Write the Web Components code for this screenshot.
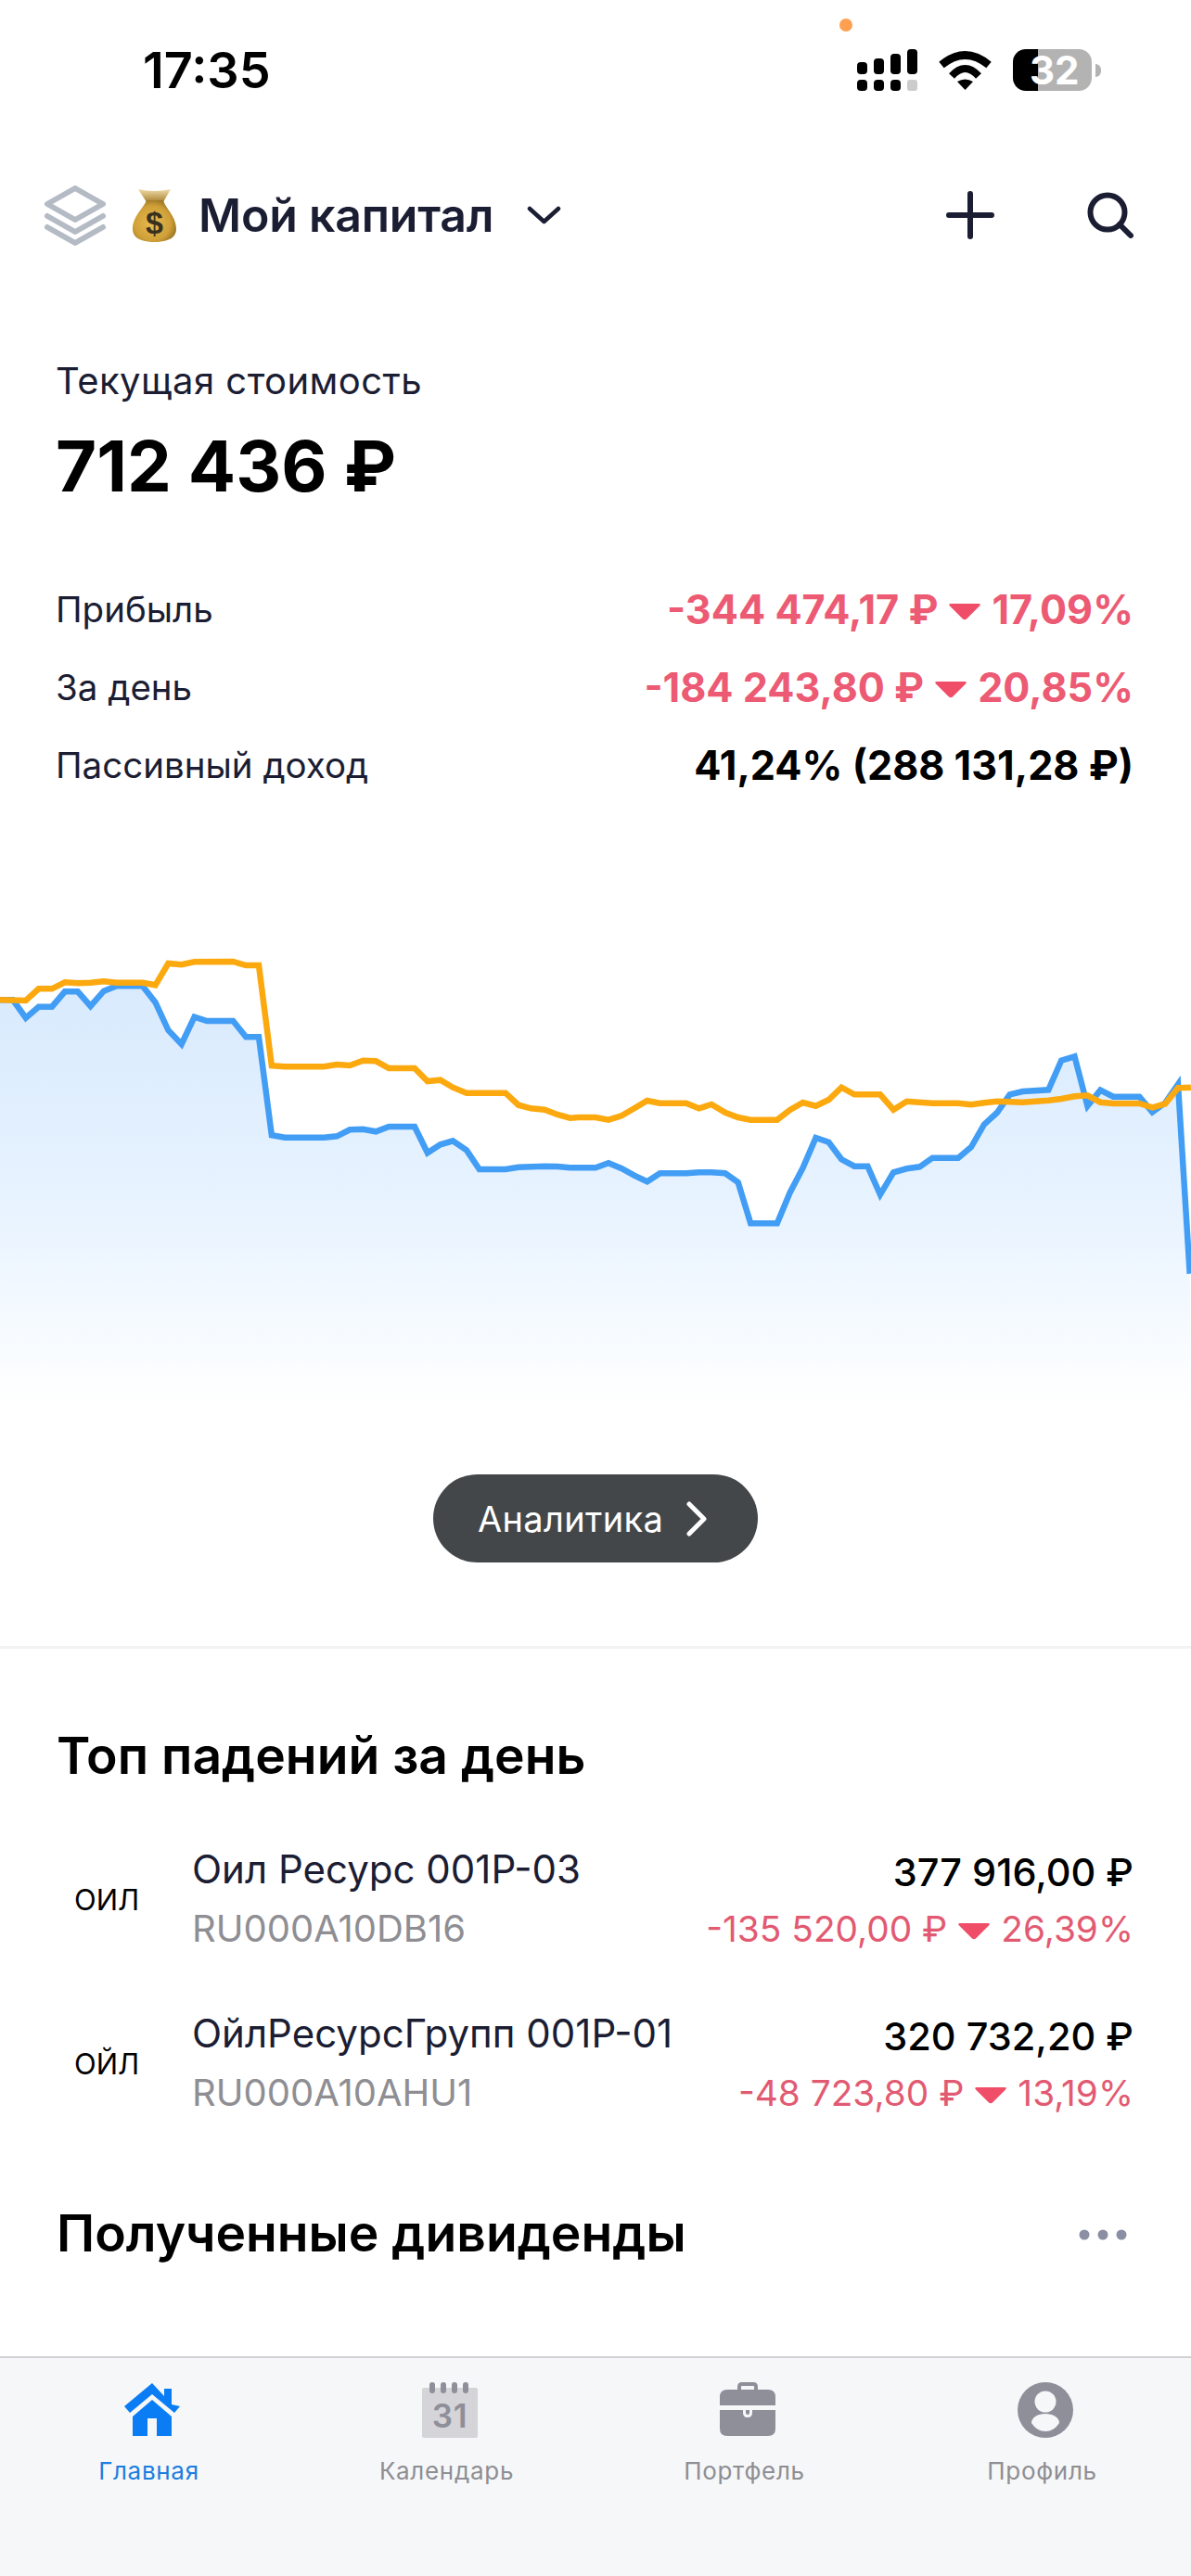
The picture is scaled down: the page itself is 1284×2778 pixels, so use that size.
<!DOCTYPE html>
<html lang="ru">
<head>
<meta charset="utf-8">
<title>Мой капитал</title>
<style>
  html, body { margin: 0; background: #fff; }
  body { font-family: Inter, "Noto Sans", sans-serif; }
</style>
</head>
<body>
<portfolio-screen>
  <status-bar></status-bar>
  <app-header></app-header>
  <value-summary>
    <stat-row label="Прибыль" tone="loss"><delta-text amount="-344 474,17 ₽" percent="17,09%"></delta-text></stat-row>
    <stat-row label="За день" tone="loss"><delta-text amount="-184 243,80 ₽" percent="20,85%"></delta-text></stat-row>
    <stat-row label="Пассивный доход">41,24% (288 131,28 ₽)</stat-row>
  </value-summary>
  <chart-panel></chart-panel>
  <section-block heading="Топ падений за день">
    <position-row ticker="ОИЛ" name="Оил Ресурс 001Р-03" isin="RU000A10DB16" total="377 916,00 ₽" amount="-135 520,00 ₽" percent="26,39%"></position-row>
    <position-row ticker="ОЙЛ" name="ОйлРесурсГрупп 001Р-01" isin="RU000A10AHU1" total="320 732,20 ₽" amount="-48 723,80 ₽" percent="13,19%"></position-row>
  </section-block>
  <dividends-head></dividends-head>
  <tab-bar slot="footer"></tab-bar>
</portfolio-screen>

<script>
// small helper, every component sets its shadow markup the same way
class ShadowElement extends HTMLElement {
  constructor() {
    super();
    this.attachShadow({ mode: 'open' });
  }
  render(html) {
    this.shadowRoot.innerHTML = html;
  }
  attr(name) {
    return this.getAttribute(name) || '';
  }
}

class PortfolioScreen extends ShadowElement {
  connectedCallback() {
    this.render(`
      <style>
        :host { display: flex; flex-direction: column; height: 2778px; overflow: hidden; color: #1b1d33; }
        main { flex: 1; min-height: 0; overflow: hidden; }
      </style>
      <main><slot></slot></main>
      <slot name="footer"></slot>`);
  }
}

class StatusBar extends ShadowElement {
  connectedCallback() {
    this.render(`
      <style>
        :host { display: block; height: 150px; position: relative; color: #000; }
        .row { display: flex; align-items: center; height: 45px; padding: 53px 97px 0 154px; }
        .time { font: 600 54px/45px Inter, sans-serif; flex: 1; }
        .dot { position: absolute; left: 905px; top: 20px; width: 14px; height: 14px; border-radius: 50%; background: #ff9f50; }
        .wifi { margin: 0 23px; display: block; }
        .signal { display: block; }
        .battery { display: flex; align-items: center; position: relative; }
        .cell { position: relative; width: 85px; height: 45px; border-radius: 14px; background: linear-gradient(90deg, #000 27px, #b3b3b3 27px); color: #fff; font: 700 42px/45px Inter, sans-serif; }
        .cell span { position: absolute; left: 18px; top: 0; }
        .nub { width: 6px; height: 14px; margin-left: 4px; background: #b3b3b3; border-radius: 0 7px 7px 0; }
      </style>
      <div class="dot"></div>
      <div class="row">
        <div class="time">17:35</div>
        <svg class="signal" width="65" height="45" viewBox="0 0 65 45">
          <rect x="0" y="14" width="11" height="13" rx="4"/><rect x="18" y="10" width="11" height="17" rx="4"/>
          <rect x="36" y="5" width="11" height="22" rx="4"/><rect x="54" y="0" width="11" height="27" rx="4"/>
          <rect x="0" y="33" width="11" height="12" rx="4"/><rect x="18" y="33" width="11" height="12" rx="4"/>
          <rect x="36" y="33" width="11" height="12" rx="4"/><rect x="54" y="33" width="11" height="12" rx="3" fill="#ccc"/>
        </svg>
        <svg class="wifi" width="57" height="42" viewBox="0 0 57 42">
          <path d="M3 15 Q28.5 -6 54 15" fill="none" stroke="#000" stroke-width="8.5"/>
          <path d="M14 27 Q28.5 11 43 27" fill="none" stroke="#000" stroke-width="8"/>
          <path d="M20 33 Q28.5 28 37 33 L28.5 42 Z"/>
        </svg>
        <div class="battery"><div class="cell"><span>32</span></div><div class="nub"></div></div>
      </div>`);
  }
}

class AppHeader extends ShadowElement {
  connectedCallback() {
    this.render(`
      <style>
        :host { display: flex; align-items: center; height: 164px; padding: 0 62px 0 47px; box-sizing: border-box; color: #1b1d33; }
        svg { display: block; flex: none; }
        .bag { margin-left: 28px; }
        h1 { margin: 0 0 0 24px; font: 600 50px/60px Inter, sans-serif; letter-spacing: -0.2px; white-space: nowrap; }
        .chev { margin-left: 36px; }
        .space { flex: 1; }
        .search { margin-left: 100px; }
      </style>
      <svg width="68" height="65" viewBox="0 0 68 65" fill="none" stroke="#b4bbc5" stroke-width="6" stroke-linecap="round" stroke-linejoin="round">
        <path d="M34 3 L64 20 L34 37 L4 20 Z"/>
        <path d="M4 33 L34 50 L64 33"/>
        <path d="M4 45 L34 62 L64 45"/>
      </svg>
      <svg class="bag" width="47" height="58" viewBox="0 0 47 58">
        <defs>
          <radialGradient id="gold" cx="0.45" cy="0.55" r="0.6"><stop offset="0" stop-color="#e8bd52"/><stop offset="0.7" stop-color="#cf9f38"/><stop offset="1" stop-color="#94701f"/></radialGradient>
          <linearGradient id="neck" x1="0" x2="0" y1="0" y2="1"><stop offset="0" stop-color="#f0dca8"/><stop offset="1" stop-color="#a8822f"/></linearGradient>
        </defs>
        <path d="M6 1 Q23 5 41 1 L33 15 H15 Z" fill="url(#neck)"/>
        <path d="M15 13 H33 C35 21 47 30 47 44 C47 54 37 58 23.5 58 C10 58 0 54 0 44 C0 30 12 21 15 13 Z" fill="url(#gold)"/>
        <text x="23.5" y="49" text-anchor="middle" font-family="Liberation Sans, sans-serif" font-weight="700" font-size="34" fill="#3a3020">$</text>
      </svg>
      <h1>Мой капитал</h1>
      <svg class="chev" width="37" height="20" viewBox="0 0 37 20" fill="none" stroke="#1b1d33" stroke-width="4.5" stroke-linecap="round" stroke-linejoin="round"><path d="M3 3 L18.5 17 L34 3"/></svg>
      <div class="space"></div>
      <svg width="52" height="52" viewBox="0 0 52 52" fill="none" stroke="#1b1d33" stroke-width="6" stroke-linecap="round"><path d="M26 3 V49 M3 26 H49"/></svg>
      <svg class="search" width="50" height="50" viewBox="0 0 50 50" fill="none" stroke="#1b1d33" stroke-width="6" stroke-linecap="round"><circle cx="22" cy="22" r="18.5"/><path d="M35 35 L47 47"/></svg>`);
  }
}

class ValueSummary extends ShadowElement {
  connectedCallback() {
    this.render(`
      <style>
        :host { display: block; padding: 73px 62px 0 60px; }
        .caption { font: 400 40px/48px Inter, sans-serif; letter-spacing: 0.45px; color: #1b1d33; }
        .value { margin-top: 21px; font: 700 76px/92px Inter, sans-serif; color: #000; }
        .rows { margin-top: 67px; }
      </style>
      <div class="caption">Текущая стоимость</div>
      <div class="value">712 436 ₽</div>
      <div class="rows"><slot></slot></div>`);
  }
}

class StatRow extends ShadowElement {
  connectedCallback() {
    const loss = this.getAttribute('tone') === 'loss';
    this.render(`
      <style>
        :host { display: flex; justify-content: space-between; align-items: center; height: 84px; white-space: nowrap; }
        .label { font: 400 38.5px/48px Inter, sans-serif; color: #1b1d33; }
        .data { font: 700 43.2px/48px Inter, sans-serif; color: ${loss ? '#ec5a73' : '#000'}; }
      </style>
      <div class="label">${this.attr('label')}</div>
      <div class="data"><slot></slot></div>`);
  }
}

class DeltaText extends ShadowElement {
  connectedCallback() {
    this.render(`
      <style>
        :host { display: inline-flex; align-items: center; gap: 11px; white-space: nowrap; }
        svg { display: block; margin-top: 4px; }
      </style>
      <span>${this.attr('amount')}</span>
      <svg width="36" height="19" viewBox="0 0 36 19"><path d="M3 1 H33 Q36 1 34 3.5 L20 17.5 Q18 19 16 17.5 L2 3.5 Q0 1 3 1 Z" fill="#f04e68"/></svg>
      <span>${this.attr('percent')}</span>`);
  }
}

// coordinates were read off two crops of the chart, so each side has its own x origin
const CHART_SX = 2.376;
const bluePts = [
  [0,232],[33,232],[66,290],[99,254],[133,254],[166,205],[199,205],[232,252],[266,203],[299,187],[365,187],[398,240],[431,330],[465,375],[498,287],[530,300],[597,300],[630,352],[663,352],[696,670],[730,677],[830,677],[863,673],[896,652],[930,650],[963,658],[996,642],[1062,642],[1095,727],[1128,700],[1160,688],[1195,718],[1228,780],[1295,780],[1328,773],[1395,770],[1428,771],[1460,775],
];
const bluePtsRight = [
  [0,775],[43,775],[76,760],[109,777],[142,800],[175,820],[208,793],[275,793],[308,790],[340,790],[375,793],[408,822],[440,955],[508,955],[541,855],[574,775],[607,678],[640,692],[673,748],[706,770],[740,770],[772,862],[806,790],[840,778],[873,772],[906,743],[972,743],[1005,708],[1038,635],[1071,597],[1104,538],[1137,528],[1203,523],[1236,428],[1270,415],[1303,575],[1336,524],[1369,545],[1436,545],[1469,595],[1502,565],[1535,505],[1565,1118],
];
const orangePts = [
  [0,232],[66,234],[99,196],[133,196],[166,175],[199,178],[232,176],[266,172],[299,176],[365,176],[398,184],[431,114],[465,118],[498,109],[597,108],[630,120],[663,120],[696,445],[730,448],[830,448],[863,441],[896,444],[930,428],[963,430],[996,453],[1062,453],[1095,495],[1128,491],[1160,515],[1195,533],[1295,533],[1328,572],[1360,583],[1395,587],[1428,603],[1460,614],
];
const orangePtsRight = [
  [0,612],[43,612],[76,620],[109,607],[142,583],[175,558],[208,566],[275,566],[308,583],[340,570],[375,596],[408,612],[440,620],[508,620],[541,588],[574,564],[607,575],[640,555],[673,515],[706,538],[772,538],[806,587],[840,560],[906,566],[972,566],[1005,571],[1038,565],[1071,560],[1137,563],[1203,557],[1236,552],[1270,544],[1303,541],[1336,563],[1369,567],[1436,567],[1469,580],[1502,568],[1535,517],[1568,515],
];
function toLine(leftPts, rightPts) {
  const a = leftPts.map(p => (p[0] / CHART_SX).toFixed(1) + ',' + (p[1] / 3).toFixed(1));
  const b = rightPts.map(p => (624 + p[0] / CHART_SX).toFixed(1) + ',' + (p[1] / 3).toFixed(1));
  return a.concat(b).join(' ');
}

class ChartPanel extends ShadowElement {
  connectedCallback() {
    const blue = toLine(bluePts, bluePtsRight);
    const orange = toLine(orangePts, orangePtsRight);
    this.render(`
      <style>
        :host { display: flex; flex-direction: column; align-items: center; margin-top: 134px; border-bottom: 3px solid #f2f2f3; height: 774px; box-sizing: content-box; }
        svg { display: block; flex: none; }
        pill-button { margin-top: 29px; }
      </style>
      <svg width="1284" height="560" viewBox="0 0 1284 560">
        <defs>
          <linearGradient id="area" gradientUnits="userSpaceOnUse" x1="0" x2="0" y1="60" y2="515">
            <stop offset="0" stop-color="#d8eafd"/>
            <stop offset="0.53" stop-color="#e8f3ff"/>
            <stop offset="0.76" stop-color="#f3f9ff"/>
            <stop offset="1" stop-color="#ffffff"/>
          </linearGradient>
        </defs>
        <polygon points="0,560 ${blue} 1284,560" fill="url(#area)"/>
        <polyline points="${blue}" fill="none" stroke="#429df5" stroke-width="6.5"/>
        <polyline points="${orange}" fill="none" stroke="#fba90f" stroke-width="6.5"/>
      </svg>
      <pill-button>Аналитика</pill-button>`);
  }
}

class PillButton extends ShadowElement {
  connectedCallback() {
    this.render(`
      <style>
        :host { display: inline-flex; align-items: center; justify-content: center; gap: 24px; width: 350px; height: 95px; box-sizing: border-box; padding-right: 6px; border-radius: 48px; background: #44474a; color: #fff; font: 400 38px/44px Inter, sans-serif; letter-spacing: 0.35px; }
        svg { display: block; }
      </style>
      <span><slot></slot></span>
      <svg width="24" height="38" viewBox="0 0 24 38" fill="none" stroke="#fff" stroke-width="5" stroke-linecap="round" stroke-linejoin="round"><path d="M4 3 L20 19 L4 35"/></svg>`);
  }
}

class SectionBlock extends ShadowElement {
  connectedCallback() {
    this.render(`
      <style>
        :host { display: block; padding: 83px 62px 0 61px; }
        h2 { margin: 0; font: 600 55.2px/64px Inter, sans-serif; color: #000; }
        .list { margin-top: 34px; }
      </style>
      <h2>${this.attr('heading')}</h2>
      <div class="list"><slot></slot></div>`);
  }
}

class PositionRow extends ShadowElement {
  connectedCallback() {
    this.render(`
      <style>
        :host { display: flex; align-items: center; height: 177px; white-space: nowrap; }
        .ticker { width: 146px; box-sizing: border-box; padding-left: 19px; font: 400 31px/36px Inter, sans-serif; color: #000; margin-top: 2px; }
        .left { flex: 1; }
        .name { font: 400 42px/48px Inter, sans-serif; color: #1b1d33; }
        .isin { margin-top: 16px; font: 400 40px/48px Inter, sans-serif; color: #8e8e93; }
        .right { text-align: right; }
        .total { font: 500 41.5px/48px Inter, sans-serif; color: #000; margin-top: 4px; }
        .delta { margin-top: 13px; font: 400 38.8px/48px Inter, sans-serif; color: #e25a72; }
      </style>
      <div class="ticker">${this.attr('ticker')}</div>
      <div class="left">
        <div class="name">${this.attr('name')}</div>
        <div class="isin">${this.attr('isin')}</div>
      </div>
      <div class="right">
        <div class="total">${this.attr('total')}</div>
        <div class="delta"><delta-text amount="${this.attr('amount')}" percent="${this.attr('percent')}"></delta-text></div>
      </div>`);
  }
}

class DividendsHead extends ShadowElement {
  connectedCallback() {
    this.render(`
      <style>
        :host { display: flex; align-items: center; justify-content: space-between; padding: 63px 69px 0 61px; }
        h2 { margin: 0; font: 600 55.2px/64px Inter, sans-serif; color: #000; }
        svg { display: block; margin-top: 3px; }
      </style>
      <h2>Полученные дивиденды</h2>
      <svg width="52" height="12" viewBox="0 0 52 12" fill="#8b8fa3"><circle cx="6" cy="6" r="5.5"/><circle cx="26" cy="6" r="5.5"/><circle cx="46" cy="6" r="5.5"/></svg>`);
  }
}

class TabItem extends ShadowElement {
  connectedCallback() {
    const active = this.hasAttribute('active');
    this.render(`
      <style>
        :host { display: flex; flex-direction: column; align-items: center; color: ${active ? '#1a7ee0' : '#8e8e93'}; font: 400 26px/32px Inter, sans-serif; letter-spacing: 0.7px; }
        .icon { height: 60px; margin-left: 6px; }
        .label { margin-top: 20px; }
        ::slotted(svg) { display: block; }
      </style>
      <div class="icon"><slot name="icon"></slot></div>
      <div class="label">${this.attr('label')}</div>`);
  }
}

class TabBar extends ShadowElement {
  connectedCallback() {
    this.render(`
      <style>
        :host { display: grid; grid-template-columns: repeat(4, 321px); height: 237px; box-sizing: border-box; padding-top: 26px; background: #f6f7f9; border-top: 2px solid #d1d1d4; }
        svg { display: block; }
      </style>
      <tab-item label="Главная" active>
        <svg slot="icon" width="60" height="60" viewBox="0 0 60 60" fill="#0a7df5">
          <path d="M30 1 L43 15 V7 H51 V24 L60 26 L54 33 L30 13 L6 33 L0 26 Z"/>
          <path d="M30 19 L51 37 V58 H35 V39 H25 V58 H9 V37 Z"/>
        </svg>
      </tab-item>
      <tab-item label="Календарь">
        <svg slot="icon" width="60" height="60" viewBox="0 0 60 60">
          <rect x="0" y="6" width="60" height="54" rx="2" fill="#d4d4d9"/>
          <g fill="#8e8f99"><rect x="8" y="0" width="6" height="12" rx="3"/><rect x="20" y="0" width="6" height="12" rx="3"/><rect x="32" y="0" width="6" height="12" rx="3"/><rect x="44" y="0" width="6" height="12" rx="3"/></g>
          <text x="30" y="49" text-anchor="middle" font-family="Inter, sans-serif" font-weight="600" font-size="35" fill="#8e8f99">31</text>
        </svg>
      </tab-item>
      <tab-item label="Портфель">
        <svg slot="icon" width="60" height="60" viewBox="0 0 60 60">
          <path d="M21 9 V5 Q21 2 24 2 H36 Q39 2 39 5 V9" fill="none" stroke="#8e8f99" stroke-width="4"/>
          <path d="M8 8 H52 Q60 8 60 16 V25 H0 V16 Q0 8 8 8 Z M0 30 H60 V50 Q60 58 52 58 H8 Q0 58 0 50 Z" fill="#8e8f99"/>
          <path d="M25 30 H35 V33 Q35 38 30 38 Q25 38 25 33 Z" fill="#f6f7f9"/>
          <path d="M28 30 H32 V33 Q32 35 30 35 Q28 35 28 33 Z" fill="#8e8f99"/>
        </svg>
      </tab-item>
      <tab-item label="Профиль">
        <svg slot="icon" width="60" height="60" viewBox="0 0 60 60">
          <circle cx="30" cy="30" r="30" fill="#8e8f99"/>
          <circle cx="30" cy="21" r="11.5" fill="#f6f7f9"/>
          <path d="M15 44 C15 38 22 34 30 34 C38 34 45 38 45 44 C41 50 36 53 30 53 C24 53 19 50 15 44 Z" fill="#f6f7f9"/>
        </svg>
      </tab-item>`);
  }
}

customElements.define('portfolio-screen', PortfolioScreen);
customElements.define('status-bar', StatusBar);
customElements.define('app-header', AppHeader);
customElements.define('value-summary', ValueSummary);
customElements.define('stat-row', StatRow);
customElements.define('delta-text', DeltaText);
customElements.define('chart-panel', ChartPanel);
customElements.define('pill-button', PillButton);
customElements.define('section-block', SectionBlock);
customElements.define('position-row', PositionRow);
customElements.define('dividends-head', DividendsHead);
customElements.define('tab-item', TabItem);
customElements.define('tab-bar', TabBar);
</script>
</body>
</html>
